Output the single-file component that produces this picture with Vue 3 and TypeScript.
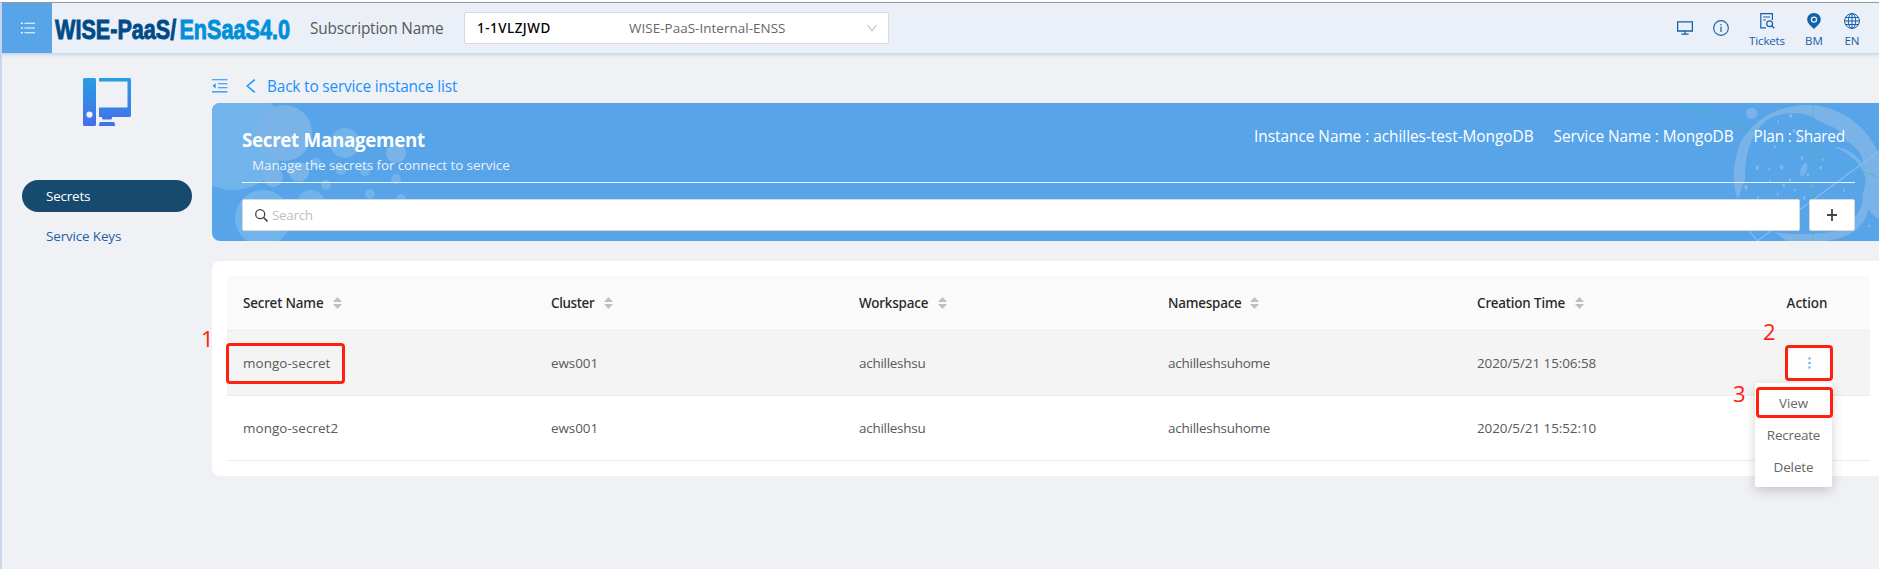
<script setup lang="ts">
interface Column { key: string; title: string; sortable: boolean }
interface SecretRow { name: string; cluster: string; workspace: string; namespace: string; created: string; open: boolean }

const columns: Column[] = [
  { key: 'name', title: 'Secret Name', sortable: true },
  { key: 'cluster', title: 'Cluster', sortable: true },
  { key: 'workspace', title: 'Workspace', sortable: true },
  { key: 'namespace', title: 'Namespace', sortable: true },
  { key: 'time', title: 'Creation Time', sortable: true },
  { key: 'action', title: 'Action', sortable: false },
]

const rows: SecretRow[] = [
  { name: 'mongo-secret', cluster: 'ews001', workspace: 'achilleshsu', namespace: 'achilleshsuhome', created: '2020/5/21 15:06:58', open: true },
  { name: 'mongo-secret2', cluster: 'ews001', workspace: 'achilleshsu', namespace: 'achilleshsuhome', created: '2020/5/21 15:52:10', open: false },
]

const menuItems: string[] = ['View', 'Recreate', 'Delete']

// Banner bubbles: centre x, centre y, radius, tone
const bubbles: [number, number, number, string][] = [
  [233, 138, 52, '#70b4eb'], [284, 133, 28, '#7ab3e8'], [345, 143, 15, '#70b4eb'], [396, 153, 10, '#7ab3e8'],
  [316, 163, 5, '#70b4eb'], [299, 172, 10, '#7ab3e8'], [273, 177, 10, '#7ab3e8'], [341, 170, 5, '#70b4eb'],
  [365, 171, 5, '#70b4eb'], [396, 179, 5, '#70b4eb'], [326, 185, 5, '#70b4eb'], [370, 194, 5, '#70b4eb'],
  [401, 199, 5, '#70b4eb'], [311, 204, 14, '#70b4eb'], [263, 218, 28, '#70b4eb'],
]

const specks: [number, number, number][] = [
  [212, 62, 4], [316, 66, 3], [174, 80, 3], [222, 108, 4], [157, 118, 4], [235, 131, 4], [308, 128, 3],
  [165, 156, 3], [246, 188, 4], [112, 218, 5], [185, 217, 5], [148, 221, 3], [308, 194, 3], [302, 219, 4],
  [264, 239, 4], [150, 258, 3], [210, 254, 4], [78, 277, 5], [191, 271, 4], [173, 297, 3], [277, 274, 3],
  [224, 284, 3], [113, 307, 3], [253, 308, 4], [372, 286, 3], [447, 393, 3],
]
</script>

<template>
  <div class="page">
    <header class="topbar">
      <button class="burger" aria-label="Menu">
        <svg width="14" height="12" viewBox="0 0 14 12"><path d="M3.4 1.2H14M3.4 6H14M3.4 10.8H14" stroke="#fff" stroke-width="1.1" /><path d="M0 1.2H1.6M0 6H1.6M0 10.8H1.6" stroke="#fff" stroke-width="1.5" /></svg>
      </button>
      <div class="logo"><div class="logo-in"><span class="wise">WISE-PaaS/</span><span class="ensaas">EnSaaS4.0</span></div></div>
      <span class="sub-label">Subscription Name</span>
      <div class="select">
        <span class="sub-id">1-1VLZJWD</span>
        <span class="sub-name">WISE-PaaS-Internal-ENSS</span>
        <svg width="10" height="8" viewBox="0 0 10 8"><path d="M.5 1L5 6.800L9.500 1" fill="none" stroke="#bfbfbf" stroke-width="1.1" /></svg>
      </div>
      <nav class="tools">
        <svg class="t-screen" width="16" height="14" viewBox="0 0 16 14"><path d="M.6.8H15.400V10H.6ZM8 10V13M4.400 13.200H11.600" fill="none" stroke="#1261ab" stroke-width="1.300" /></svg>
        <svg class="t-info" width="16" height="16" viewBox="0 0 16 16"><circle cx="8" cy="8" r="7.350" fill="none" stroke="#1261ab" stroke-width="1.100" /><path d="M8 6.600V12M8 4V5.300" stroke="#1261ab" stroke-width="1.200" /></svg>
        <div class="tool tickets">
          <svg width="15" height="16" viewBox="0 0 15 16"><path d="M6 14.900H.8V.7H12.400V7M3.200 4H10M3.200 7H6" fill="none" stroke="#1261ab" stroke-width="1.200" /><circle cx="9.600" cy="10.700" r="2.900" fill="none" stroke="#1261ab" stroke-width="1.200" /><path d="M11.700 12.800L14.300 15.300" stroke="#1261ab" stroke-width="1.300" /></svg>
          <span>Tickets</span>
        </div>
        <div class="tool bm">
          <svg width="14" height="16" viewBox="0 0 14 16"><path fill-rule="evenodd" d="M7 0C3.100 0 .2 2.900.2 6.400C.2 10 3.500 12.300 7 16C10.500 12.300 13.800 10 13.800 6.400C13.800 2.900 10.900 0 7 0ZM7 3.400A3.200 3.200 0 1 1 7 9.800A3.200 3.200 0 1 1 7 3.400Z" fill="#1261ab" /><circle cx="7" cy="6.600" r="1.900" fill="#1261ab" /></svg>
          <span>BM</span>
        </div>
        <div class="tool en">
          <svg width="16" height="16" viewBox="0 0 16 16"><g fill="none" stroke="#1261ab" stroke-width="1"><circle cx="8" cy="8" r="7.400" /><ellipse cx="8" cy="8" rx="3.700" ry="7.400" /><path d="M8 .6V15.400M.6 8H15.400M1.600 4.500H14.400M1.600 11.500H14.400" /></g></svg>
          <span>EN</span>
        </div>
      </nav>
    </header>

    <div class="body">
      <aside class="sidebar">
        <svg class="side-icon" width="48" height="48" viewBox="0 0 48 48">
          <defs><linearGradient id="pc" x1="0" y1="0" x2="0" y2="48" gradientUnits="userSpaceOnUse"><stop offset="0" stop-color="#269fe3" /><stop offset="1" stop-color="#476eea" /></linearGradient></defs>
          <path fill-rule="evenodd" fill="url(#pc)" d="M1.500 0H11.500Q13 0 13 1.500V46.500Q13 48 11.500 48H1.500Q0 48 0 46.500V1.500Q0 0 1.500 0ZM6.500 33.500A3.100 3.100 0 1 0 6.500 39.700A3.100 3.100 0 1 0 6.500 33.500ZM16 0H46.500Q48 0 48 1.500V37.500Q48 39 46.500 39H29V40.500L28 41.500H20L19 40.500V39H16V29.500H44.500V3.500H16ZM17.500 44H30.500Q32 44 32 48H16Q16 44 17.500 44Z" />
        </svg>
        <a class="side-item active">Secrets</a>
        <a class="side-item keys">Service Keys</a>
      </aside>

      <main class="main">
        <div class="crumb">
          <svg width="16" height="14" viewBox="0 0 16 14"><path d="M0 .8H15.500M6 4.700H15.500M6 8.800H15.500M0 12.900H15.500" stroke="#1890ff" stroke-width="1.100" /><path d="M3.600 4.200V9.400L.6 6.800Z" fill="#1890ff" /></svg>
          <svg class="back" width="10" height="14" viewBox="0 0 10 14"><path d="M8.800.6L1.200 7L8.800 13.400" fill="none" stroke="#1890ff" stroke-width="1.400" /></svg>
          <a>Back to service instance list</a>
        </div>

        <section class="banner">
          <svg class="art" width="1667" height="138" viewBox="212 103 1667 138">
            <circle v-for="(b, i) in bubbles" :key="i" :cx="b[0]" :cy="b[1]" :r="b[2]" :fill="b[3]" />
            <g transform="translate(1720 95) scale(.3333)" fill="#7ab3e8">
              <path d="M52 310C30 250 45 155 78 118C120 60 190 28 270 30C360 35 445 90 482 190V372C455 365 445 340 428 320C425 290 440 270 436 245C425 205 390 175 340 155C380 155 410 180 432 210C425 175 405 150 378 138C378 118 350 100 330 92C310 88 290 70 270 64C245 50 175 45 130 85C85 130 75 190 75 255C60 285 62 300 52 310Z" />
              <path d="M165 412C230 422 330 418 380 400C405 370 420 350 428 320L446 340C440 380 410 410 372 425C340 436 300 442 200 442C195 430 180 425 165 412Z" />
              <circle cx="95" cy="55" r="17" />
              <ellipse cx="251" cy="224" rx="9" ry="21" transform="rotate(18 251 224)" />
              <g fill="#80b9ec"><ellipse v-for="(s, i) in specks" :key="i" :cx="s[0]" :cy="s[1]" :rx="s[2]" :ry="s[2] * 1.5" /></g>
              <path d="M482 165L112 438L86 406" fill="none" stroke="#86bcee" stroke-width="3.500" />
            </g>
            <path d="M1679 103L1879 177.500M1812.500 103V241" stroke="#3fc0b0" stroke-opacity=".75" fill="none" />
          </svg>
          <div class="banner-top">
            <div>
              <h1>Secret Management</h1>
              <p>Manage the secrets for connect to service</p>
            </div>
            <div class="facts">
              <span class="f1">Instance Name : achilles-test-MongoDB</span>
              <span class="f2">Service Name : MongoDB</span>
              <span class="f3">Plan : Shared</span>
            </div>
          </div>
          <div class="search-row">
            <div class="search">
              <svg width="13" height="13" viewBox="0 0 13 13"><circle cx="5.200" cy="5.200" r="4.500" fill="none" stroke="#444" stroke-width="1.300" /><path d="M8.300 8.300L12.500 12.500" stroke="#444" stroke-width="1.600" /></svg>
              <span>Search</span>
            </div>
            <button class="add" aria-label="Add"><svg width="10" height="12" viewBox="0 0 10 12"><path d="M5 0V12M0 6H10" stroke="#444" stroke-width="1.800" /></svg></button>
          </div>
        </section>

        <section class="card">
          <div class="row head">
            <div v-for="c in columns" :key="c.key" class="cell" :class="'h-' + c.key">
              <span>{{ c.title }}</span>
              <svg v-if="c.sortable" width="9" height="12" viewBox="0 0 9 12"><path d="M4.500 0L9 5H0ZM0 7H9L4.500 12Z" fill="#bfbfbf" /></svg>
            </div>
          </div>
          <div v-for="r in rows" :key="r.name" class="row" :class="{ hover: r.open }">
            <div class="cell c-name"><span>{{ r.name }}</span>
              <template v-if="r.open"><i class="mark m1"></i><b class="num n1">1</b></template>
            </div>
            <div class="cell c-cluster">{{ r.cluster }}</div>
            <div class="cell c-ws">{{ r.workspace }}</div>
            <div class="cell c-ns">{{ r.namespace }}</div>
            <div class="cell c-time">{{ r.created }}</div>
            <div class="cell c-action">
              <template v-if="r.open">
                <b class="num n2">2</b>
                <div class="mark m2"><svg width="3" height="12" viewBox="0 0 3 12"><path d="M.5.500H2.500V2.500H.5ZM.5 5H2.500V7H.5ZM.5 9.500H2.500V11.500H.5Z" fill="#58a9ee" /></svg></div>
                <b class="num n3">3</b>
                <div class="menu">
                  <div v-for="m in menuItems" :key="m" class="menu-item" :class="m.toLowerCase()">{{ m }}</div>
                  <i class="mark m3"></i>
                </div>
              </template>
            </div>
          </div>
        </section>
      </main>
    </div>
  </div>
</template>

<style>
body { background: #fff; overflow: hidden; }
</style>

<style scoped>
* { box-sizing: border-box; }
.page { width: 1879px; height: 569px; padding-top: 2px; display: flex; flex-direction: column; overflow: hidden; font: 13.44px 'Open Sans', 'Noto Sans', sans-serif; color: #595959; }
.topbar { position: relative; z-index: 1; flex: none; height: 52px; display: flex; align-items: center; border-top: 1px solid #999; border-left: 2px solid #c9d5e9; border-bottom: 1px solid #c6d8ea; background: #eaeff8; box-shadow: 0 1px 3px #c6d8ea; }
.burger { width: 50px; height: 50px; border: 0; padding: 0 0 0 1px; background: #58a4e9; display: flex; align-items: center; justify-content: center; }
.logo { margin: 4px 0 0 3px; width: 240px; height: 32px; font: 700 27px/32px 'Liberation Sans', sans-serif; }
.logo-in { display: flex; gap: 4px; width: 300px; transform: scaleX(.8); transform-origin: 0 0; white-space: nowrap; }
.wise { color: #004b87; -webkit-text-stroke: .9px #004b87; }
.ensaas { color: #008fd8; -webkit-text-stroke: .9px #008fd8; }
.sub-label { margin-left: 15px; width: 139px; font-size: 15.36px; letter-spacing: -.17px; white-space: nowrap; }
.select { margin-left: 15px; width: 425px; height: 32px; border: 1px solid #d9d9d9; border-radius: 2px; background: #fff; display: flex; align-items: center; padding: 0 11px 0 12px; }
.sub-id { width: 152px; font-family: 'Noto Sans', sans-serif; font-weight: 500; color: #000; letter-spacing: .5px; }
.sub-name { flex: 1; letter-spacing: .04px; color: #666; }
.tools { flex: 1; height: 50px; display: flex; align-items: center; color: #1261ab; }
.t-screen { margin-left: 788px; }
.t-info { margin-left: 20px; }
.tool { display: flex; flex-direction: column; align-items: center; font-size: 11.52px; line-height: 16px; gap: 4px; height: 30px; }
.tool svg { height: 16px; flex: none; }
.tickets { width: 38px; margin-left: 19px; letter-spacing: -.15px; }
.bm { width: 20px; margin-left: 18px; }
.en { width: 20px; margin-left: 18px; }

.body { flex: 1; display: flex; border-left: 2px solid #c9d5e9; background: #f0f1f5; }
.sidebar { width: 210px; padding: 24px 20px 0; display: flex; flex-direction: column; gap: 8px; }
.side-icon { margin: 0 0 46px 61px; flex: none; }
.side-item { width: 170px; height: 32px; line-height: 32px; padding-left: 24px; border-radius: 16px; color: #1b5fa8; letter-spacing: -.14px; }
.active { background: #164b6f; color: #fff; letter-spacing: -.2px; }

.main { flex: 1; min-width: 0; }
.crumb { height: 49px; padding-top: 15px; display: flex; align-items: center; color: #1890ff; }
.crumb a { margin-left: 11px; font-size: 15.36px; letter-spacing: -.16px; }
.back { margin-left: 18px; }
.banner { position: relative; height: 138px; border-radius: 8px 0 0 8px; background: #58a4e9; overflow: hidden; padding: 0 24px 0 30px; color: #fff; }
.art { position: absolute; left: 0; top: 0; }
.banner-top { position: relative; height: 80px; border-bottom: 1px solid #f0f1f5; display: flex; justify-content: space-between; }
h1 { margin: 24px 0 0; font-size: 18.8px; line-height: 26px; font-weight: 700; letter-spacing: -.32px; }
p { margin: 2px 0 0 10px; line-height: 20px; letter-spacing: -.07px; color: #e8f1fb; }
.facts { display: flex; gap: 20px; padding: 21px 10px 0 0; height: 47px; line-height: 26px; font-size: 15.36px; white-space: nowrap; }
.f1 { letter-spacing: -.02px; }
.f2 { letter-spacing: -.04px; }
.f3 { letter-spacing: -.18px; }
.search-row { position: relative; margin-top: 16px; display: flex; gap: 9px; }
.search { flex: 1; height: 32px; border: 1px solid #d9d9d9; border-radius: 2px; background: #fff; display: flex; align-items: center; padding-left: 12px; gap: 4px; color: #bfbfbf; letter-spacing: -.3px; }
.add { width: 46px; height: 32px; padding: 0; border: 1px solid #d9d9d9; border-radius: 2px; background: #fff; display: flex; align-items: center; justify-content: center; }

.card { margin-top: 20px; height: 215px; padding: 15px 9px 0 15px; border-radius: 8px 0 0 8px; background: #fff; }
.row { display: grid; grid-template-columns: 308px 308px 309px 309px 283px 126px; height: 65px; border-bottom: 1px solid #ebebeb; }
.row.hover { background: #f4f4f4; }
.row.head { height: 55px; background: #fafafa; color: #262626; font-family: 'Noto Sans', sans-serif; font-weight: 500; letter-spacing: -.14px; }
.cell { position: relative; display: flex; align-items: center; padding-left: 16px; }
.head .cell { gap: 9.5px; }
.head .h-cluster { letter-spacing: -.34px; }
.head .h-namespace { gap: 8.5px; letter-spacing: -.2px; }
.head .h-action { justify-content: center; padding-left: 0; letter-spacing: 0; }
.c-name { letter-spacing: .06px; }
.c-cluster { letter-spacing: -.05px; }
.c-ws { letter-spacing: -.25px; }
.c-ns { letter-spacing: -.22px; }
.c-time { letter-spacing: -.06px; }
.mark { position: absolute; border: 3px solid #ff2010; border-radius: 4px; }
.m1 { left: -1px; top: 12px; width: 119px; height: 41px; }
.m2 { left: 41px; top: 14px; width: 48px; height: 36px; background: #fdfdfd; display: flex; align-items: center; justify-content: center; }
.m3 { left: 1px; top: 4px; width: 77px; height: 31px; }
.num { position: absolute; font-weight: 400; font-size: 22px; line-height: 24px; color: #ff2010; }
.n1 { left: -26px; top: -5px; }
.n2 { left: 19px; top: -12px; }
.n3 { left: -11px; top: 50px; }
.menu { position: absolute; z-index: 2; left: 11px; top: 52px; width: 77px; height: 104px; padding: 4px 0; border-radius: 2px; background: #fff; box-shadow: 0 4px 12px rgba(0, 0, 0, .18); }
.menu-item { height: 32px; line-height: 32px; text-align: center; color: #666; letter-spacing: -.1px; }
.recreate { letter-spacing: -.22px; }
</style>
